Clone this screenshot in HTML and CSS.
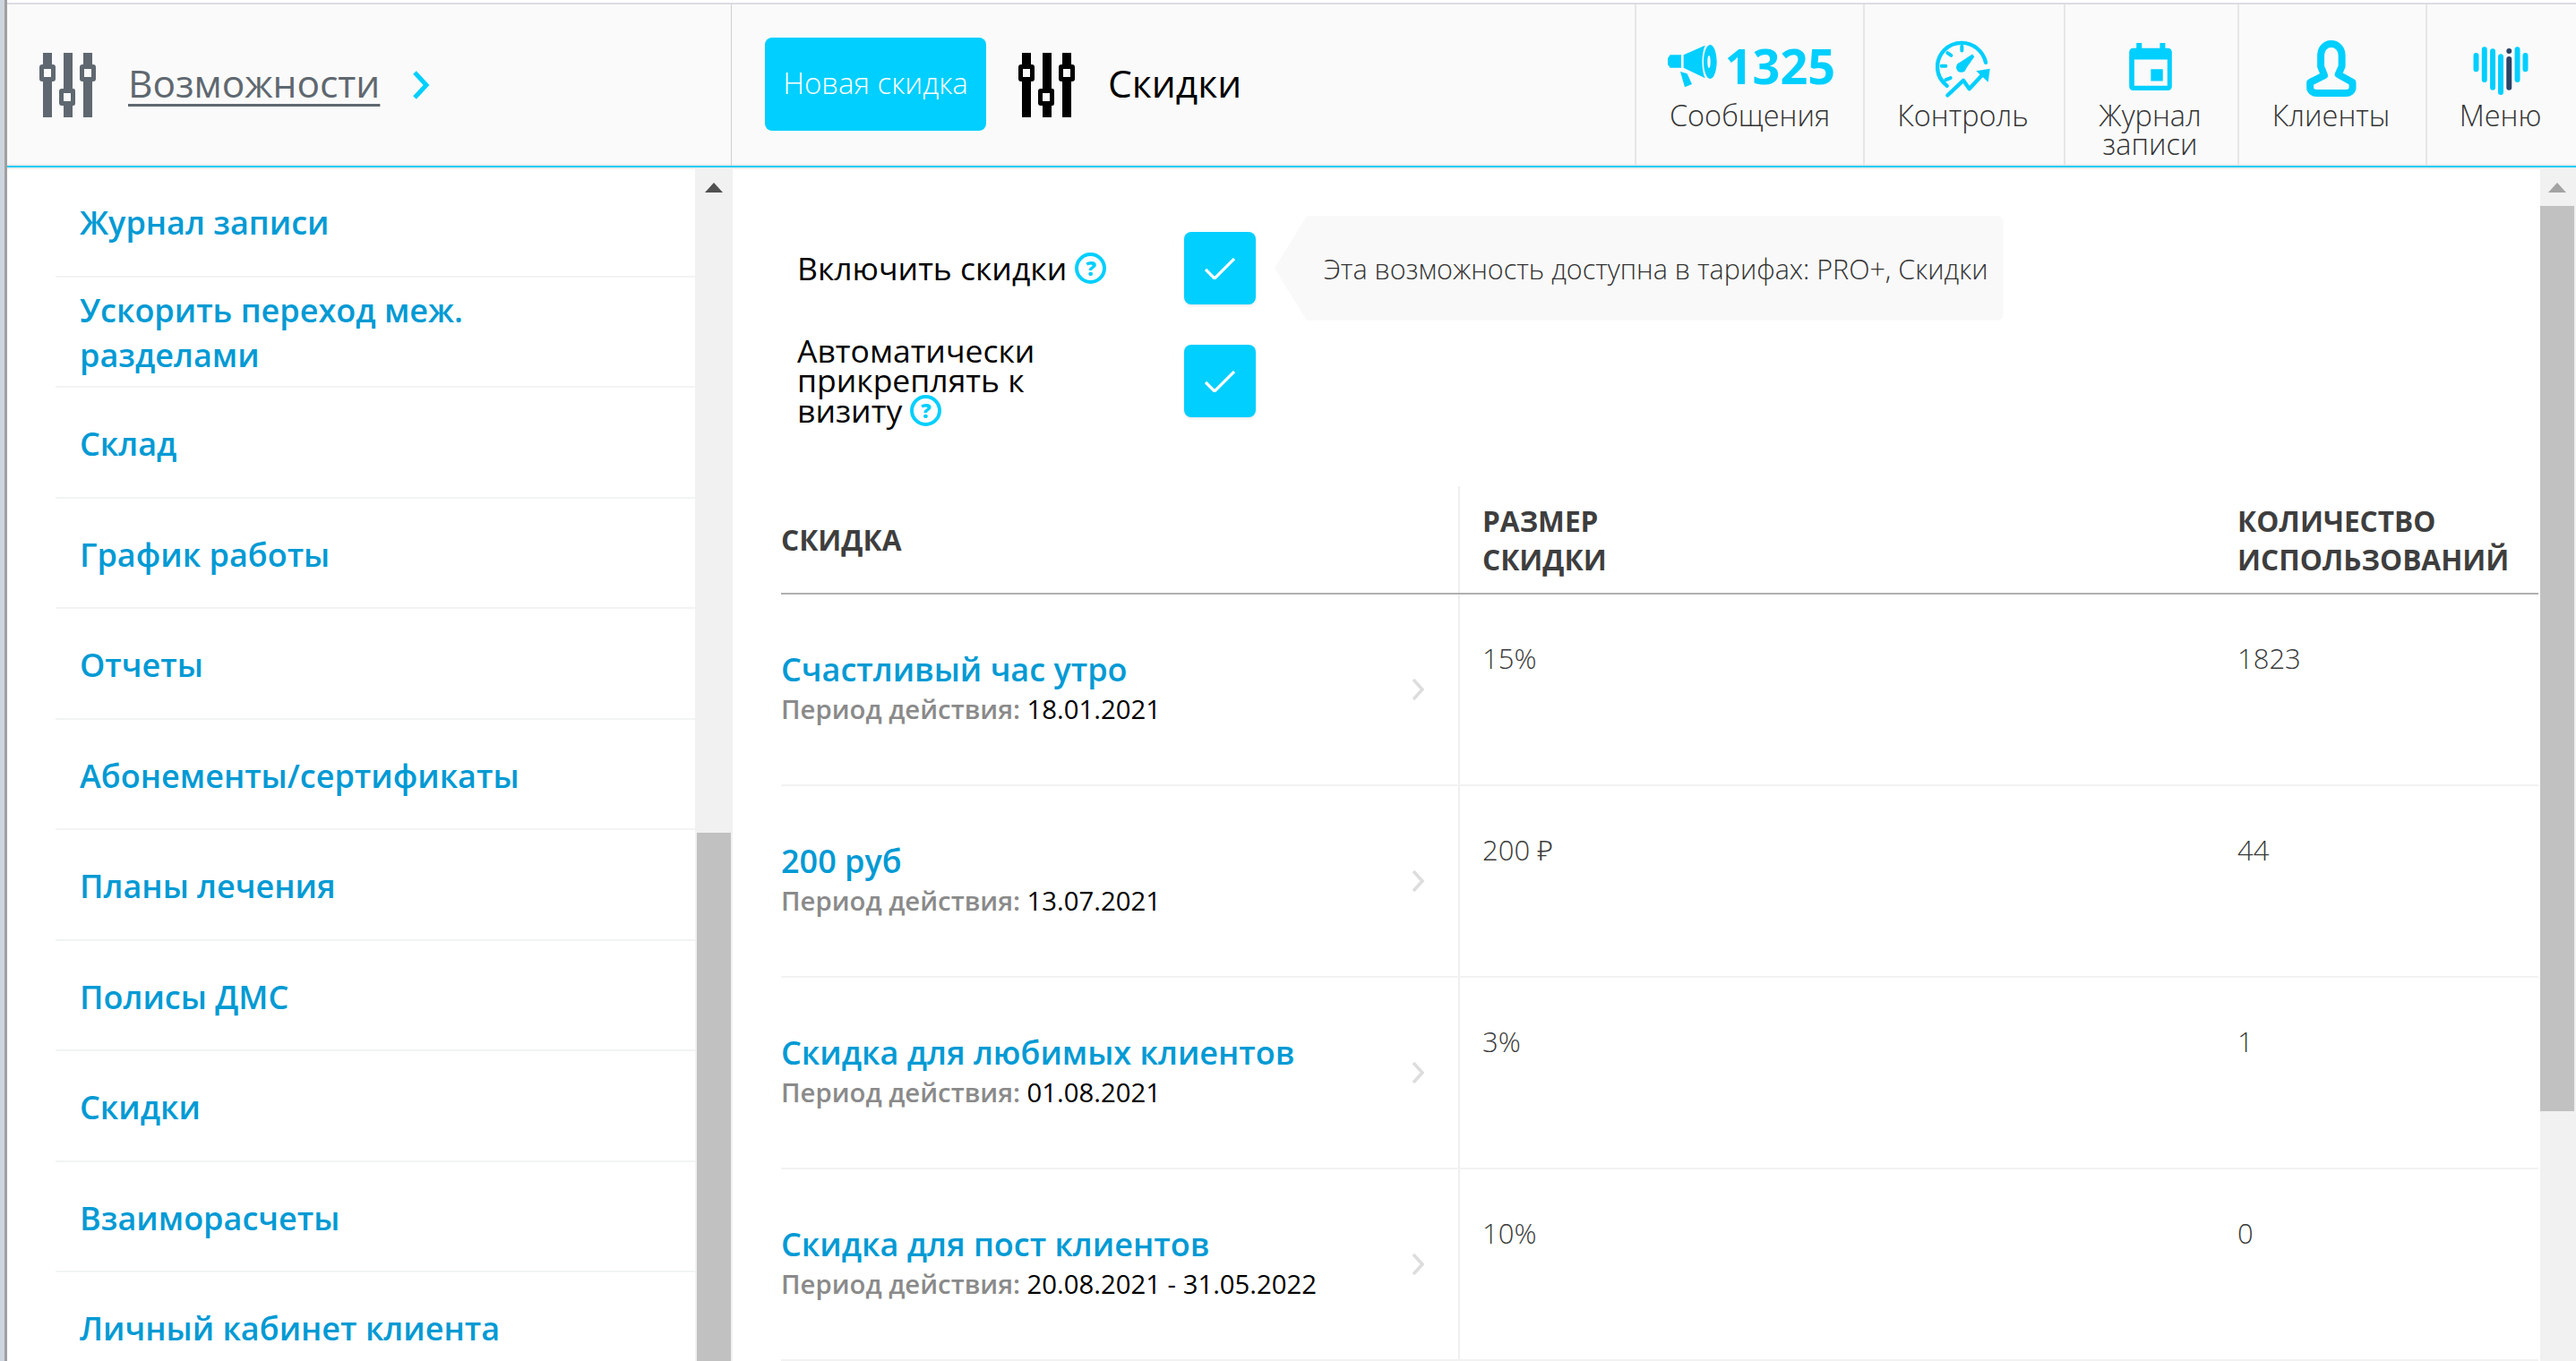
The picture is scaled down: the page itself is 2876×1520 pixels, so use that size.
FILE: index.html
```html
<!DOCTYPE html>
<html lang="ru">
<head>
<meta charset="utf-8">
<title>Скидки</title>
<link rel="stylesheet" href="styles.css">
</head>
<body>
<div class="app">
  <header class="topbar">
    <div class="top-left">
      <svg class="sliders sliders-gray" viewBox="0 0 63 72"><use href="#sl"/></svg>
      <a class="top-title">Возможности</a>
      <svg class="chev" viewBox="0 0 20 34"><path d="M3 3 L16 17 L3 31" fill="none" stroke="#00cfff" stroke-width="5"/></svg>
    </div>
    <div class="top-mid">
      <button class="btn-new">Новая скидка</button>
      <svg class="sliders sliders-black" viewBox="0 0 63 72"><use href="#sl"/></svg>
      <span class="page-title">Скидки</span>
    </div>
    <nav class="top-nav">
      <div class="nav-item nav-msg">
        <div class="nav-ico msg-ico">
          <svg class="ico-mega" viewBox="40 55 165 147"><path d="M48 92H85V135H48L40 124V103Z"/><path d="M93 92L165 60C152 90 152 140 165 170L93 135Z"/><path fill-rule="evenodd" d="M182 58C194 58 204 84 204 115S194 172 182 172 160 146 160 115 170 58 182 58ZM178 94C175 94 173 103 173 115S175 136 178 136 183 127 183 115 181 94 178 94Z"/><path d="M82 148L105 155L121 190L97 200Z"/></svg>
          <span class="msg-count">1325</span>
        </div>
        <span class="nav-label">Сообщения</span>
      </div>
      <div class="nav-item nav-ctl">
        <div class="nav-ico">
          <svg class="ico-speed" viewBox="932 46 183 194"><path d="M1100 120C1092 82 1058 54 1020 54C972 54 938 92 938 135C938 160 950 182 970 198" fill="none" stroke="#00cfff" stroke-width="13" stroke-linecap="round"/><path d="M1020 66V80M972 88L984 96M952 132H966M966 178L982 172" stroke="#00cfff" stroke-width="12" stroke-linecap="round" fill="none"/><circle cx="1018" cy="136" r="17" fill="#00cfff"/><path d="M1006 124L1055 92L1062 100L1030 146Z" fill="#00cfff"/><path d="M972 230L1025 180L1045 208L1088 162" fill="none" stroke="#00cfff" stroke-width="13" stroke-linecap="round" stroke-linejoin="round"/><path d="M1068 148L1114 141L1108 186Z" fill="#00cfff"/></svg>
        </div>
        <span class="nav-label">Контроль</span>
      </div>
      <div class="nav-item nav-cal">
        <div class="nav-ico">
          <svg class="ico-cal" viewBox="108 55 142 158"><path fill-rule="evenodd" fill="#00cfff" d="M132 55H150V72H210V55H228V72H236Q250 72 250 86V199Q250 213 236 213H122Q108 213 108 199V86Q108 72 122 72H132ZM125 110V197H235V110ZM180 142H220V182H180Z"/></svg>
        </div>
        <span class="nav-label">Журнал записи</span>
      </div>
      <div class="nav-item nav-cli">
        <div class="nav-ico">
          <svg class="ico-person" viewBox="700 45 168 190"><path d="M783 57C805 57 819 75 819 95V133L807 160L855 187V205C855 215 845 223 832 223H735C722 223 712 215 712 205V187L760 163L748 133V95C748 75 762 57 783 57Z" fill="none" stroke="#00cfff" stroke-width="24" stroke-linejoin="round"/></svg>
        </div>
        <span class="nav-label">Клиенты</span>
      </div>
      <div class="nav-item nav-menu">
        <div class="nav-ico">
          <svg class="ico-heart" viewBox="1262 62 186 163"><g stroke="#00cfff" stroke-width="18" stroke-linecap="round" fill="none"><path d="M1272 92V138M1300 72V174M1328 78V200M1355 96V216M1411 72V174M1438 92V138"/></g><path d="M1383 104V200" stroke="#2b4466" stroke-width="18" stroke-linecap="round"/><circle cx="1383" cy="77" r="9" fill="#2b4466"/></svg>
        </div>
        <span class="nav-label">Меню</span>
      </div>
    </nav>
  </header>
  <div class="body-row">
    <aside class="sidebar">
      <ul class="side-list">
        <li class="side-item">Журнал записи</li>
        <li class="side-item side-item-two">Ускорить переход меж. разделами</li>
        <li class="side-item">Склад</li>
        <li class="side-item">График работы</li>
        <li class="side-item">Отчеты</li>
        <li class="side-item">Абонементы/сертификаты</li>
        <li class="side-item">Планы лечения</li>
        <li class="side-item">Полисы ДМС</li>
        <li class="side-item">Скидки</li>
        <li class="side-item">Взаиморасчеты</li>
        <li class="side-item">Личный кабинет клиента</li>
      </ul>
      <div class="scroll scroll-side">
        <span class="scroll-up dark"></span>
        <span class="thumb"></span>
      </div>
    </aside>
    <main class="content">
      <div class="content-inner">
        <section class="settings">
          <div class="set-row set-row-first">
            <div class="set-label">Включить скидки <span class="help">?</span></div>
            <span class="check"><svg viewBox="0 0 34 24"><path d="M1 13L11 23L33 1" fill="none" stroke="#fff" stroke-width="3.2"/></svg></span>
            <div class="tip">Эта возможность доступна в тарифах: PRO+, Скидки</div>
          </div>
          <div class="set-row">
            <div class="set-label">Автоматически прикреплять к визиту <span class="help">?</span></div>
            <span class="check"><svg viewBox="0 0 34 24"><path d="M1 13L11 23L33 1" fill="none" stroke="#fff" stroke-width="3.2"/></svg></span>
          </div>
        </section>
        <table class="grid">
          <thead>
            <tr><th class="c1">СКИДКА</th><th class="c2">РАЗМЕР<br>СКИДКИ</th><th class="c3">КОЛИЧЕСТВО<br>ИСПОЛЬЗОВАНИЙ</th></tr>
          </thead>
          <tbody>
            <tr>
              <td class="c1"><div class="cell-name"><div class="cell-text"><div class="d-name">Счастливый час утро</div><div class="d-period"><span>Период действия:</span> 18.01.2021</div></div><svg class="row-chev" viewBox="0 0 14 26"><path d="M2 2L12 13L2 24" fill="none" stroke="#ddd" stroke-width="3.5"/></svg></div></td>
              <td class="c2">15%</td><td class="c3">1823</td>
            </tr>
            <tr>
              <td class="c1"><div class="cell-name"><div class="cell-text"><div class="d-name">200 руб</div><div class="d-period"><span>Период действия:</span> 13.07.2021</div></div><svg class="row-chev" viewBox="0 0 14 26"><path d="M2 2L12 13L2 24" fill="none" stroke="#ddd" stroke-width="3.5"/></svg></div></td>
              <td class="c2">200 ₽</td><td class="c3">44</td>
            </tr>
            <tr>
              <td class="c1"><div class="cell-name"><div class="cell-text"><div class="d-name">Скидка для любимых клиентов</div><div class="d-period"><span>Период действия:</span> 01.08.2021</div></div><svg class="row-chev" viewBox="0 0 14 26"><path d="M2 2L12 13L2 24" fill="none" stroke="#ddd" stroke-width="3.5"/></svg></div></td>
              <td class="c2">3%</td><td class="c3">1</td>
            </tr>
            <tr>
              <td class="c1"><div class="cell-name"><div class="cell-text"><div class="d-name">Скидка для пост клиентов</div><div class="d-period"><span>Период действия:</span> 20.08.2021 - 31.05.2022</div></div><svg class="row-chev" viewBox="0 0 14 26"><path d="M2 2L12 13L2 24" fill="none" stroke="#ddd" stroke-width="3.5"/></svg></div></td>
              <td class="c2">10%</td><td class="c3">0</td>
            </tr>
          </tbody>
        </table>
      </div>
      <div class="scroll scroll-main">
        <span class="scroll-up"></span>
        <span class="thumb"></span>
      </div>
    </main>
  </div>
</div>
<svg class="defs" width="0" height="0">
  <symbol id="sl" viewBox="0 0 63 72">
    <path fill-rule="evenodd" d="M4 0H14V13H15Q18 13 18 16V29Q18 32 15 32H14V72H4V32H3Q0 32 0 29V16Q0 13 3 13H4ZM5 18V27H13V18Z"/>
    <path fill-rule="evenodd" d="M27 0H37V40H38Q40 40 40 43V56Q40 59 38 59H37V72H27V59H25Q22 59 22 56V43Q22 40 25 40H27ZM27 45V54H35V45Z"/>
    <path fill-rule="evenodd" d="M49 0H59V13H60Q63 13 63 16V29Q63 32 60 32H59V72H49V32H48Q45 32 45 29V16Q45 13 48 13H49ZM50 18V27H58V18Z"/>
  </symbol>
</svg>
</body>
</html>
```

FILE: styles.css
```css
* { box-sizing: border-box; }
html, body { margin: 0; padding: 0; height: 100%; overflow: hidden; background: #fff; }
body { font-family: "Open Sans", "Noto Sans", sans-serif; color: #000; }
.defs { display: block; height: 0; }
.app { height: 1520px; margin-left: 8px; padding-top: 3px; position: relative; display: flex; flex-direction: column; }
.app::before { content: ""; position: absolute; left: -8px; top: 0; bottom: 0; width: 8px; background: linear-gradient(90deg, #cdd5de 0, #cdd5de 5px, #a0a0a0 5px, #a0a0a0 8px); }
.topbar { height: 184px; display: flex; background: #fafafa; border-top: 2px solid #dcdce4; border-bottom: 2px solid #0dcbf5; box-shadow: inset 0 -2px 0 #eee; flex: none; }
.top-left { width: 809px; display: flex; align-items: center; padding: 0 0 0 36px; border-right: 1px solid #cfcfcf; flex: none; }
.sliders { width: 63px; height: 72px; flex: none; }
.sliders-gray { fill: #5f6870; }
.sliders-black { fill: #000; }
.top-title { font-size: 42.5px; color: #5f6870; text-decoration: underline; text-decoration-thickness: 3px; text-underline-offset: 7px; margin: 0 0 5px 36px; }
.chev { width: 20px; height: 34px; margin-left: 36px; }
.top-mid { width: 1008px; display: flex; align-items: center; padding-left: 37px; flex: none; }
.btn-new { width: 247px; height: 104px; background: #00cfff; border: 0; border-radius: 8px; color: #fff; font: 300 33px "Open Sans", sans-serif; padding: 0 0 3px; margin-bottom: 3px; }
.top-mid .sliders { margin-left: 36px; }
.page-title { font-size: 42.5px; margin: 0 0 5px 37px; color: #000; }
.top-nav { flex: 1; display: flex; }
.nav-item { border-left: 2px solid #e6e6e6; display: flex; flex-direction: column; align-items: center; padding: 40px 3px 0 0; color: #333; }
.nav-msg { width: 255px; padding-right: 0; }
.nav-ctl { width: 224px; }
.nav-cal { width: 194px; }
.nav-cli { width: 210px; }
.nav-menu { flex: 1; }
.nav-ico { height: 64px; display: flex; align-items: flex-start; justify-content: center; }
.msg-ico { align-items: center; gap: 9px; height: 56px; margin: 0 0 8px 4px; }
.ico-mega { width: 55px; height: 49px; fill: #00cfff; }
.msg-count { font-size: 54px; font-weight: 700; color: #00cfff; line-height: 56px; }
.ico-speed { width: 61px; height: 65px; }
.ico-cal { width: 48px; height: 53px; margin-top: 3px; }
.ico-person { width: 56px; height: 63px; }
.ico-heart { width: 62px; height: 54px; margin-top: 7px; }
.nav-label { font-size: 32.5px; font-weight: 300; line-height: 32px; text-align: center; margin-top: 4px; }
.nav-cal .nav-label { width: 130px; }
.body-row { flex: 1; display: flex; min-height: 0; border-top: 2px solid #eee; }
.sidebar { width: 810px; flex: none; display: flex; overflow: hidden; }
.side-list { list-style: none; margin: -3px 0 0; padding: 0 0 0 54px; flex: 1; min-width: 0; }
.side-item { height: 123.5px; display: flex; align-items: center; padding: 5px 100px 0 27px; font-size: 36px; font-weight: 600; line-height: 50px; color: #009ad4; border-bottom: 2px solid #f2f4f4; }
.side-item-two { padding-top: 3px; }
.scroll { background: #f1f1f1; flex: none; display: flex; flex-direction: column; align-items: center; }
.scroll-side { width: 42px; padding: 0 2px; }
.scroll-main { width: 40px; padding-right: 2px; }
.scroll-up { width: 0; height: 0; border: 10px solid transparent; border-top: 0; border-bottom: 11px solid #a3a3a3; margin-top: 15px; }
.scroll-up.dark { border-bottom-color: #505050; }
.thumb { background: #c1c1c1; width: 100%; display: block; }
.scroll-side .thumb { margin-top: 715px; flex: 1; }
.scroll-main .thumb { margin-top: 15px; height: 1011px; }
.content { flex: 1; display: flex; min-width: 0; background: #fff; }
.content-inner { flex: 1; min-width: 0; padding: 52px 2px 0 54px; overflow: hidden; }
.settings { padding-left: 18px; }
.set-row { display: flex; align-items: center; min-height: 81px; margin-top: 17px; }
.set-row-first { height: 117px; margin-top: 0; }
.set-label { width: 432px; font-size: 35.5px; line-height: 33px; padding-right: 130px; flex: none; }
.set-row-first .set-label { padding-right: 0; }
.help { display: inline-flex; width: 35px; height: 35px; border: 4px solid #00cfff; border-radius: 50%; align-items: center; justify-content: center; color: #00cfff; font-size: 23px; font-weight: 800; line-height: 1; vertical-align: 5px; }
.check { width: 80px; height: 81px; background: #00cfff; border-radius: 8px; display: flex; align-items: center; justify-content: center; flex: none; box-shadow: 0 2px 3px rgba(0,0,0,.08); }
.check svg { width: 34px; height: 24px; }
.tip { margin-left: 21px; height: 117px; background: #f9f9f9; padding: 0 17px 0 55px; display: flex; align-items: center; font-size: 30.5px; font-weight: 300; color: #333; clip-path: polygon(36px 0, 100% 0, 100% 100%, 36px 100%, 0 50%); border-radius: 0 8px 8px 0; }
.grid { border-collapse: collapse; table-layout: fixed; width: 1962px; margin-top: 67px; }
.grid th { height: 120px; text-align: left; vertical-align: middle; font-size: 31.6px; font-weight: 700; line-height: 43px; color: #3e3e3e; border-bottom: 2px solid #b0b0b0; padding: 0; }
.grid td { height: 214px; vertical-align: top; padding: 0; font-size: 31px; font-weight: 300; color: #3a3a3a; border-bottom: 2px solid #f2f2f2; }
.grid th.c1, .grid td.c1 { width: 757px; }
.grid th.c2, .grid td.c2 { width: 869px; padding-left: 25px; border-left: 2px solid #efefef; }
.grid th.c3, .grid td.c3 { width: 336px; }
.grid td.c2, .grid td.c3 { padding-top: 51px; line-height: 40px; }
.cell-name { display: flex; align-items: center; justify-content: space-between; height: 211px; padding-right: 38px; }
.cell-text { margin-bottom: 4px; }
.d-name { font-size: 36px; font-weight: 600; color: #009ad4; line-height: 48px; }
.d-period { font-size: 29.3px; font-weight: 400; color: #000; line-height: 40px; }
.d-period span { color: #8a8a8a; font-weight: 600; }
.row-chev { width: 14px; height: 26px; flex: none; }
```
